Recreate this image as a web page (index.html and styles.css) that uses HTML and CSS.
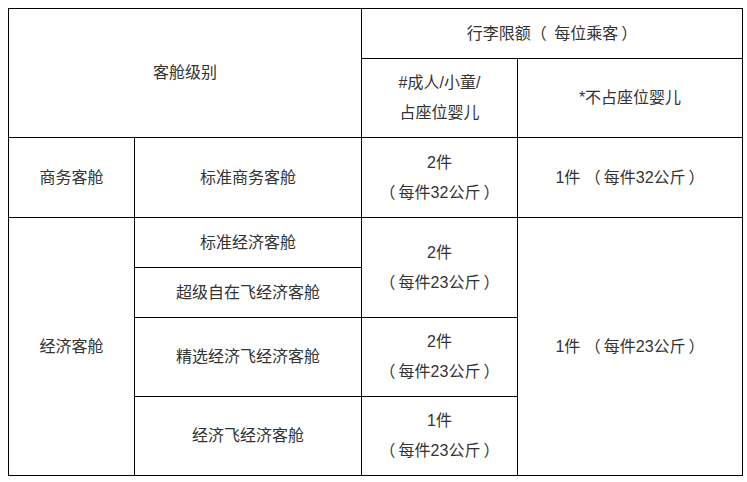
FILE: index.html
```html
<!DOCTYPE html>
<html lang="zh-CN">
<head>
<meta charset="utf-8">
<title>行李限额</title>
<link rel="stylesheet" href="styles.css">
</head>
<body>
<table class="baggage">
  <colgroup>
    <col class="c1">
    <col class="c2">
    <col class="c3">
    <col class="c4">
  </colgroup>
  <tbody>
    <tr class="r50">
      <td colspan="2" rowspan="2">客舱级别</td>
      <td colspan="2">行李限额<span class="po">（</span> 每位乘客<span class="pc">）</span></td>
    </tr>
    <tr class="r79">
      <td>#成人/小童/<br>占座位婴儿</td>
      <td>*不占座位婴儿</td>
    </tr>
    <tr class="r80">
      <td>商务客舱</td>
      <td>标准商务客舱</td>
      <td>2件<br><span class="po">（</span>每件32公斤<span class="pc">）</span></td>
      <td>1件 <span class="po">（</span>每件32公斤<span class="pc">）</span></td>
    </tr>
    <tr class="r50">
      <td rowspan="4">经济客舱</td>
      <td>标准经济客舱</td>
      <td rowspan="2">2件<br><span class="po">（</span>每件23公斤<span class="pc">）</span></td>
      <td rowspan="4">1件 <span class="po">（</span>每件23公斤<span class="pc">）</span></td>
    </tr>
    <tr class="r50">
      <td>超级自在飞经济客舱</td>
    </tr>
    <tr class="r79">
      <td>精选经济飞经济客舱</td>
      <td>2件<br><span class="po">（</span>每件23公斤<span class="pc">）</span></td>
    </tr>
    <tr class="r79">
      <td>经济飞经济客舱</td>
      <td>1件<br><span class="po">（</span>每件23公斤<span class="pc">）</span></td>
    </tr>
  </tbody>
</table>
</body>
</html>
```

FILE: styles.css
```css
html {
  background: #ffffff;
  overflow: hidden;
}
body {
  margin: 8px 0 0 8px;
  font-family: "Liberation Sans", "Noto Sans CJK SC", sans-serif;
  font-size: 16px;
  color: #333333;
}
.baggage {
  border-collapse: collapse;
  table-layout: fixed;
  width: 734px;
}
.c1 { width: 126px; }
.c2 { width: 227px; }
.c3 { width: 156px; }
.c4 { width: 225px; }
.baggage td {
  border: 1px solid #000000;
  padding: 0;
  text-align: center;
  vertical-align: middle;
  line-height: 30px;
}
.po {
  margin-right: 3px;
}
.pc {
  margin-left: 3px;
}
.r50 { height: 50px; }
.r79 { height: 79px; }
.r80 { height: 80px; }
```
